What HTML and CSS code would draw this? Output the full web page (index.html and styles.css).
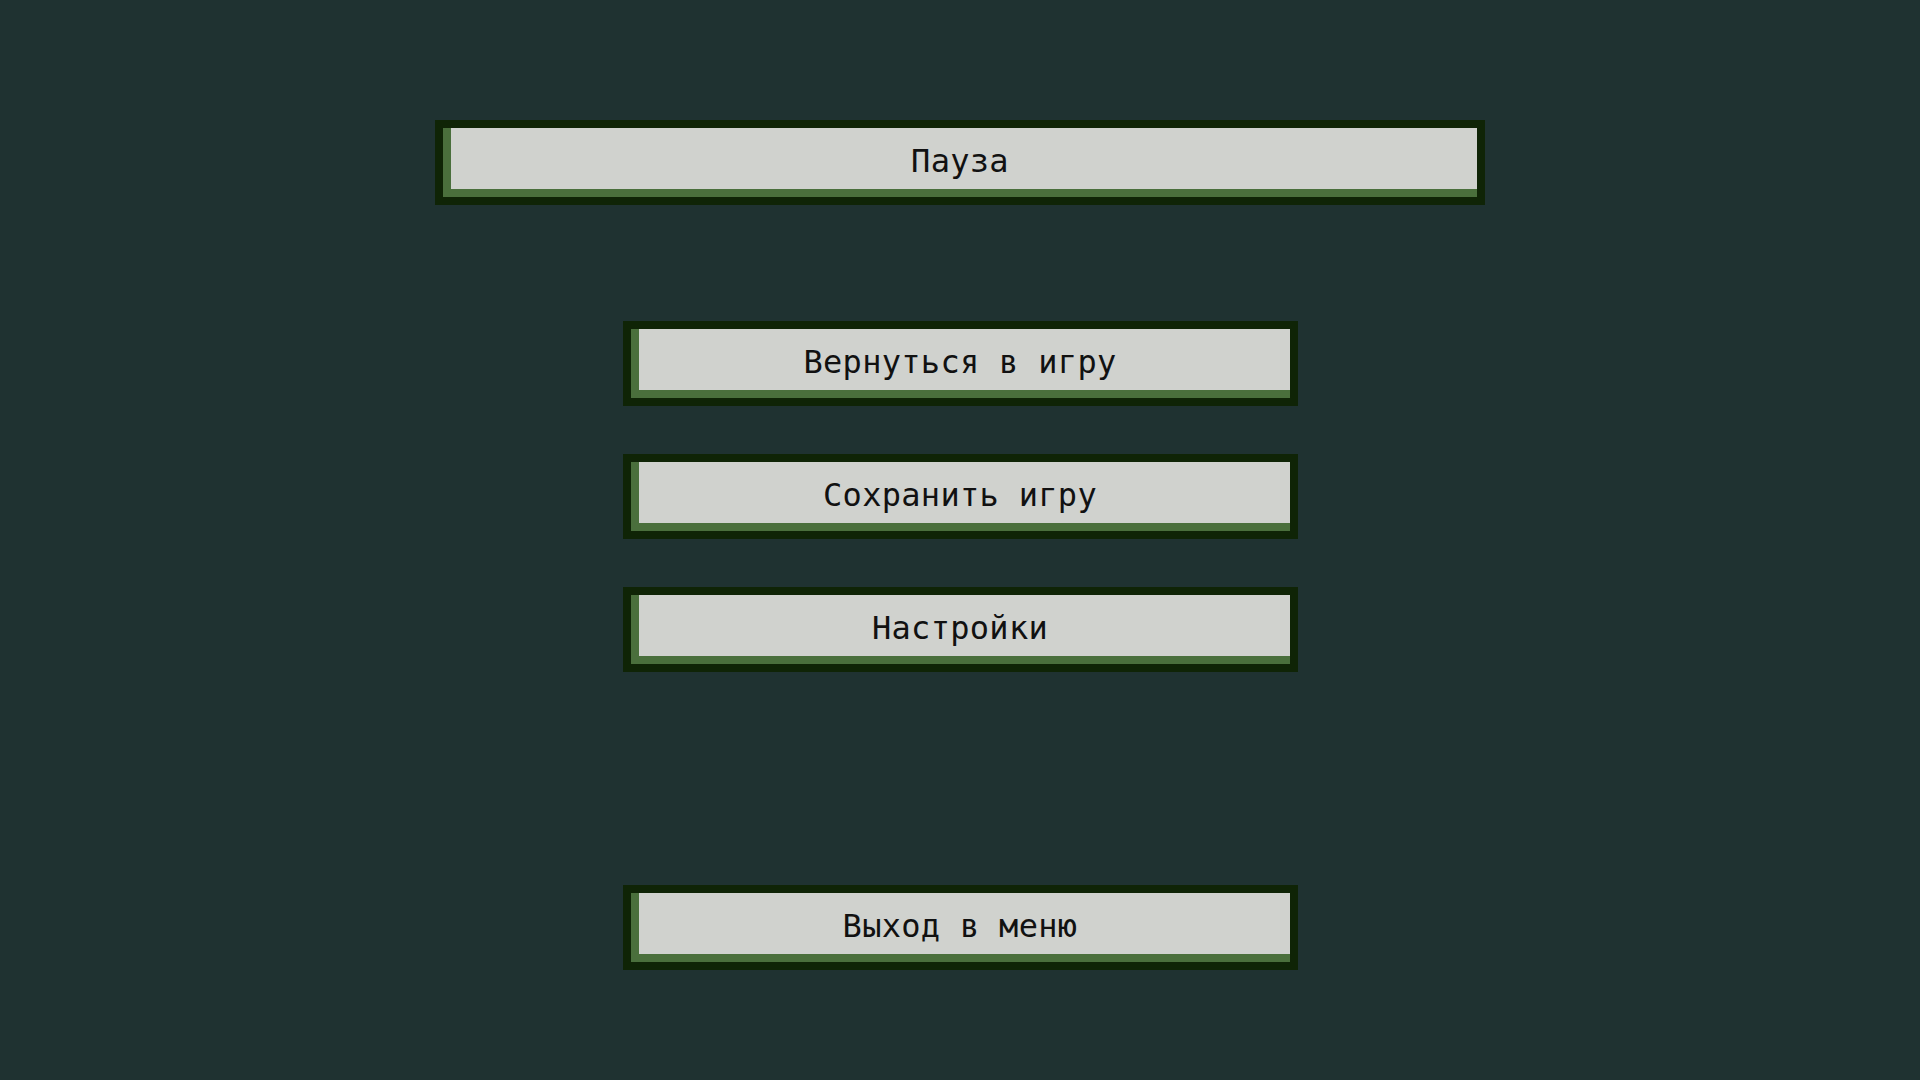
FILE: index.html
```html
<!DOCTYPE html>
<html lang="ru">
<head>
<meta charset="utf-8">
<title>Пауза</title>
<link rel="stylesheet" href="styles.css">
</head>
<body>
<main class="screen">
  <div class="panel title"><span class="label">Пауза</span></div>
  <nav class="menu">
    <button class="panel btn">Вернуться в игру</button>
    <button class="panel btn">Сохранить игру</button>
    <button class="panel btn">Настройки</button>
    <button class="panel btn exit">Выход в меню</button>
  </nav>
</main>
</body>
</html>
```
FILE: styles.css
```css
html, body {
  margin: 0;
  padding: 0;
  height: 100%;
}
body {
  background: #1f3231;
  font-family: "DejaVu Sans Mono", "Liberation Mono", monospace;
  overflow: hidden;
}
.screen {
  display: flex;
  flex-direction: column;
  align-items: center;
  padding-top: 120px;
}
.panel {
  box-sizing: border-box;
  height: 85px;
  border: 8px solid #0f2406;
  background: #d0d2ce;
  box-shadow: inset 8px -8px 0 #4a6f3c;
  display: flex;
  align-items: center;
  justify-content: center;
  color: #111;
  font-family: "DejaVu Sans Mono", "Liberation Mono", monospace;
  font-size: 32px;
  letter-spacing: 0.3px;
  line-height: 1;
  padding: 0 0 4px 0;
  margin: 0;
}
.title {
  width: 1050px;
}
.menu {
  display: flex;
  flex-direction: column;
  gap: 48px;
  margin-top: 116px;
}
.btn {
  width: 675px;
  cursor: pointer;
  outline: none;
}
.exit {
  margin-top: 165px;
}
```
